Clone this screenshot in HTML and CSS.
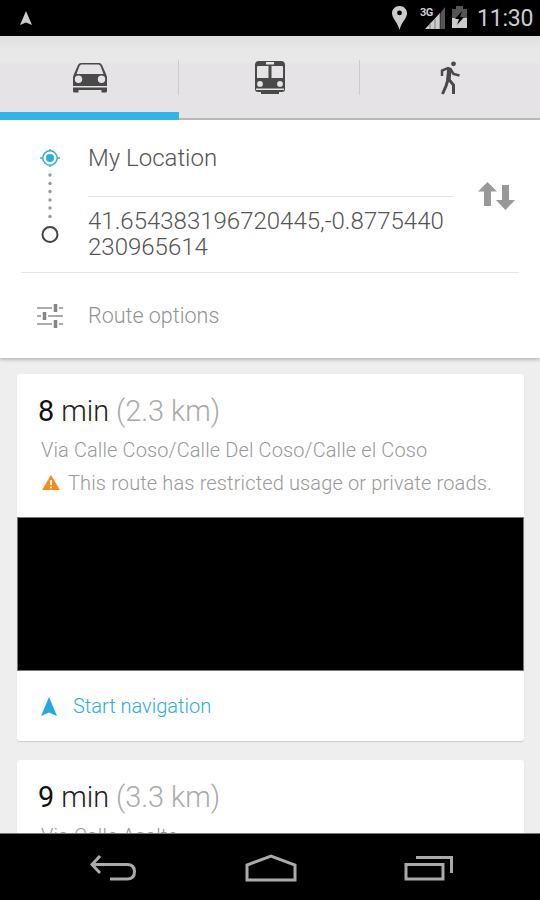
FILE: index.html
```
<!DOCTYPE html>
<html lang="en">
<head>
<meta charset="utf-8">
<meta name="viewport" content="width=device-width">
<title>Directions</title>
<link rel="stylesheet" href="styles.css">
</head>
<body>
<div class="screen">
  <header class="status">
    <svg class="status-nav" width="12" height="14" viewBox="0 0 12 14"><path d="M6 0L12 14L6 11.500L0 14Z" fill="#ccc"/></svg>
    <div class="status-right">
      <svg width="15" height="24" viewBox="0 0 15 24"><path fill-rule="evenodd" d="M7.5 0C3 0 0 3.3 0 7.3C0 12.5 5 15 7.5 24C10 15 15 12.5 15 7.3C15 3.3 12 0 7.5 0ZM7.5 4.500A2.400 2.400 0 1 1 7.500 9.300A2.400 2.400 0 1 1 7.500 4.500Z" fill="#ccc"/></svg>
      <div class="signal"><svg width="20" height="22" viewBox="0 0 20 22"><path d="M0 22L15 6V22Z" fill="#ccc"/><path d="M16 5L20 0V22H16Z" fill="#555"/><path d="M5 17V22M10 12V22M15 6V22" stroke="#777"/></svg><span class="network">3G</span></div>
      <svg width="15" height="22" viewBox="0 0 15 22"><path d="M4 0H11V3H15V22H0V3H4Z" fill="#555"/><path d="M0 12H15V22H0Z" fill="#ccc"/><path d="M10 5L3 13H7L5 19L12 11H8Z" fill="#000"/></svg>
      <span class="clock">11:30</span>
    </div>
  </header>
  <nav class="tabs">
    <div class="tab active">
      <svg width="36" height="32" viewBox="0 0 36 32"><path fill-rule="evenodd" d="M9 1H27Q29 1 30 3L34 12L35 15V24H1V15L2 12L6 3Q7 1 9 1ZM9 2.500L7.500 4L4.500 12H31.500L28.500 4L27 2.500ZM6.500 13.500A3.700 3.700 0 1 0 6.500 20.900A3.700 3.700 0 1 0 6.500 13.500ZM29.500 13.500A3.700 3.700 0 1 0 29.500 20.900A3.700 3.700 0 1 0 29.500 13.500Z" fill="#494949"/><path d="M1 25.500H35V29Q35 30.500 33.500 30.500H29.500V28H6.500V30.500H2.500Q1 30.500 1 29Z" fill="#494949"/></svg>
    </div>
    <div class="tab">
      <svg width="32" height="34" viewBox="0 0 32 34"><path fill-rule="evenodd" d="M5 0H27Q31 0 31 4V28Q31 31 28 31H4Q1 31 1 28V4Q1 0 5 0ZM12 1V3.500H20V1ZM4 5Q3 5 3 6V17H14.500V5ZM17.500 5V17H29V6Q29 5 28 5ZM6 20A2.900 2.900 0 1 0 6 25.800A2.900 2.900 0 1 0 6 20ZM26 20A2.900 2.900 0 1 0 26 25.800A2.900 2.900 0 1 0 26 20ZM2 27.500V29H30V27.500Z" fill="#494949"/><path d="M7 31H25V33H7Z" fill="#494949"/></svg>
    </div>
    <div class="tab">
      <svg width="20" height="34" viewBox="0 0 20 34" fill="none" stroke="#494949"><circle cx="13.500" cy="2.800" r="2.400" fill="#494949" stroke="none"/><path d="M2 15V9.500L8 7L10.500 8L13.500 13L19.500 14.500" stroke-width="2.500"/><path d="M8.500 17L6 25L2.500 33M8.500 18L13.500 24V33" stroke-width="3"/><path d="M9.500 7.500L8.300 19" stroke-width="4.500"/></svg>
    </div>
  </nav>
  <section class="planner">
    <div class="endpoints">
      <svg class="track" width="24" height="98" viewBox="0 0 24 98"><circle cx="12" cy="11" r="7.200" fill="none" stroke="#2caee1" stroke-width="1.500"/><circle cx="12" cy="11" r="4" fill="#2caee1"/><path d="M2 11H5M19 11H22M12 2V4M12 18V20" stroke="#2caee1" stroke-width="1.500"/><g fill="#999"><circle cx="12" cy="28" r="1.700"/><circle cx="12" cy="36.500" r="1.700"/><circle cx="12" cy="44.500" r="1.700"/><circle cx="12" cy="53" r="1.700"/><circle cx="12" cy="61" r="1.700"/><circle cx="12" cy="69.500" r="1.700"/></g><circle cx="12" cy="87.500" r="7.500" fill="none" stroke="#444" stroke-width="2"/></svg>
      <div class="fields">
        <div class="origin">My Location</div>
        <div class="destination">41.654383196720445,-0.8775440<br>230965614</div>
      </div>
      <svg class="swap" width="37" height="28" viewBox="0 0 37 28" fill="#999"><path d="M9.500 0L19 9.500H13V24H6V9.500H0Z"/><path d="M24 3H31V18H37L27.500 28L18 18H24Z"/></svg>
    </div>
    <div class="options">
      <svg width="26" height="26" viewBox="0 0 26 26" stroke="#aaa" stroke-width="2"><path d="M0 5H15M22 5H26M0 13H4M11 13H26M0 21H15M22 21H26"/><path d="M18.500 1V9M7.500 9V17M18.500 17V25" stroke="#858585" stroke-width="3.500"/></svg>
      <span>Route options</span>
    </div>
  </section>
  <main class="routes">
    <article class="card">
      <div class="summary">
        <h2><b>8</b> min <span>(2.3 km)</span></h2>
        <p class="via">Via Calle Coso/Calle Del Coso/Calle el Coso</p>
        <p class="warning"><svg width="18" height="15" viewBox="0 0 18 15"><path d="M9 0L18 15H0Z" fill="#f68b1f"/><path d="M9 5V10M9 11.500V13.200" stroke="#fff" stroke-width="1.800"/></svg><span>This route has restricted usage or private roads.</span></p>
      </div>
      <div class="map"></div>
      <div class="start"><svg width="16" height="19" viewBox="0 0 16 19"><path d="M8 0L16 19L8 15.500L0 19Z" fill="#22aae0"/></svg><span>Start navigation</span></div>
    </article>
    <article class="card">
      <div class="summary">
        <h2><b>9</b> min <span>(3.3 km)</span></h2>
        <p class="via">Via Calle Asalto</p>
      </div>
    </article>
  </main>
  <footer class="system">
    <svg width="48" height="26" viewBox="0 0 48 26" fill="none" stroke="#aaa" stroke-width="3"><path d="M11 1L3 9.500L11 18M3 9.500H38Q45.500 9.500 45.500 16.700Q45.500 24 38 24H21"/></svg>
    <svg width="52" height="28" viewBox="0 0 52 28" fill="none" stroke="#aaa" stroke-width="3"><path d="M2 26V11L26 2L50 11V26Z"/></svg>
    <svg width="50" height="26" viewBox="0 0 50 26" fill="none" stroke="#aaa" stroke-width="3"><path d="M2 9.500H39V24H2ZM12 2.500H47.500V18"/></svg>
  </footer>
</div>
</body>
</html>
```
FILE: styles.css
```
* { box-sizing: border-box; }
body { margin: 0; font-family: Roboto, sans-serif; font-weight: 300; }
svg { display: block; flex: none; }
.screen { width: 540px; height: 900px; overflow: hidden; display: flex; flex-direction: column; background: #eee; }
.status { height: 36px; flex: none; background: #000; display: flex; justify-content: space-between; padding: 6px 7px 0 20px; }
.status-nav { margin-top: 5px; }
.status-right { display: flex; align-items: flex-start; }
.signal { display: flex; position: relative; width: 38px; justify-content: flex-end; margin-right: 7px; padding-top: 1px; }
.network { position: absolute; left: 13px; top: 1px; font-size: 11px; line-height: 11px; font-weight: 700; letter-spacing: -0.5px; color: #ccc; }
.clock { color: #ccc; font-size: 23px; line-height: 26px; font-weight: 400; width: 56px; margin-left: 10px; letter-spacing: -0.2px; white-space: nowrap; }
.tabs { height: 84px; flex: none; display: grid; grid-template-columns: repeat(3, 1fr); background: linear-gradient(#dedede, #e8e8e8 14px, #e8e8e8 26px, #e5e3e5 29px); border-bottom: 2px solid #b8b8b8; }
.tab { display: flex; justify-content: center; align-items: center; height: 84px; background: linear-gradient(#ccc, #ccc) right 24px / 1px 35px no-repeat; }
.tab:last-child { background: none; }
.tab.active { border-bottom: 8px solid #31b5e5; padding-top: 7px; margin-right: 1px; }
.planner { height: 238px; flex: none; background: #fff; box-shadow: 0 2px 3px #bbb; position: relative; }
.endpoints { height: 153px; margin: 0 21px; border-bottom: 1px solid #e5e5e5; display: flex; }
.track { margin: 27px 0 0 17px; }
.fields { margin-left: 26px; width: 365px; color: #555; font-size: 24px; }
.origin { height: 77px; border-bottom: 1px solid #e5e5e5; padding-top: 24px; line-height: 28px; }
.destination { padding-top: 11px; line-height: 26px; white-space: nowrap; }
.swap { margin: 62px 0 0 25px; }
.options { display: flex; align-items: center; height: 85px; padding-left: 37px; gap: 25px; font-size: 21.5px; color: #929292; }
.routes { flex: 1; min-height: 0; overflow: hidden; padding: 16px 16px 0 17px; }
.card { background: #fff; border-radius: 3px; box-shadow: 0 1px 1px #ccc; margin-bottom: 19px; }
.summary { height: 143px; padding: 20px 21px 0; }
h2 { margin: 0; font-size: 28.8px; line-height: 35px; font-weight: 300; color: #222; white-space: nowrap; }
h2 b { font-weight: 400; color: #111; }
h2 span { color: #aaa; }
p { margin: 0; color: #999; font-size: 20px; white-space: nowrap; }
.via { margin: 9px 0 0 3px; line-height: 24px; letter-spacing: 0.12px; }
.warning { display: flex; align-items: center; gap: 7px; margin: 9px 0 0 5px; line-height: 24px; letter-spacing: 0.14px; }
.warning svg { margin: -2px 1px 0 -1px; }
.map { height: 154px; background: #000; border: 1px solid #777; }
.start { height: 70px; display: flex; align-items: center; padding-left: 24px; gap: 16px; color: #28ade2; font-size: 20px; }
.system { height: 67px; flex: none; background: #000; border-top: 1px solid #777; display: flex; align-items: center; justify-content: space-between; padding: 2px 86px 0 89px; }
```
